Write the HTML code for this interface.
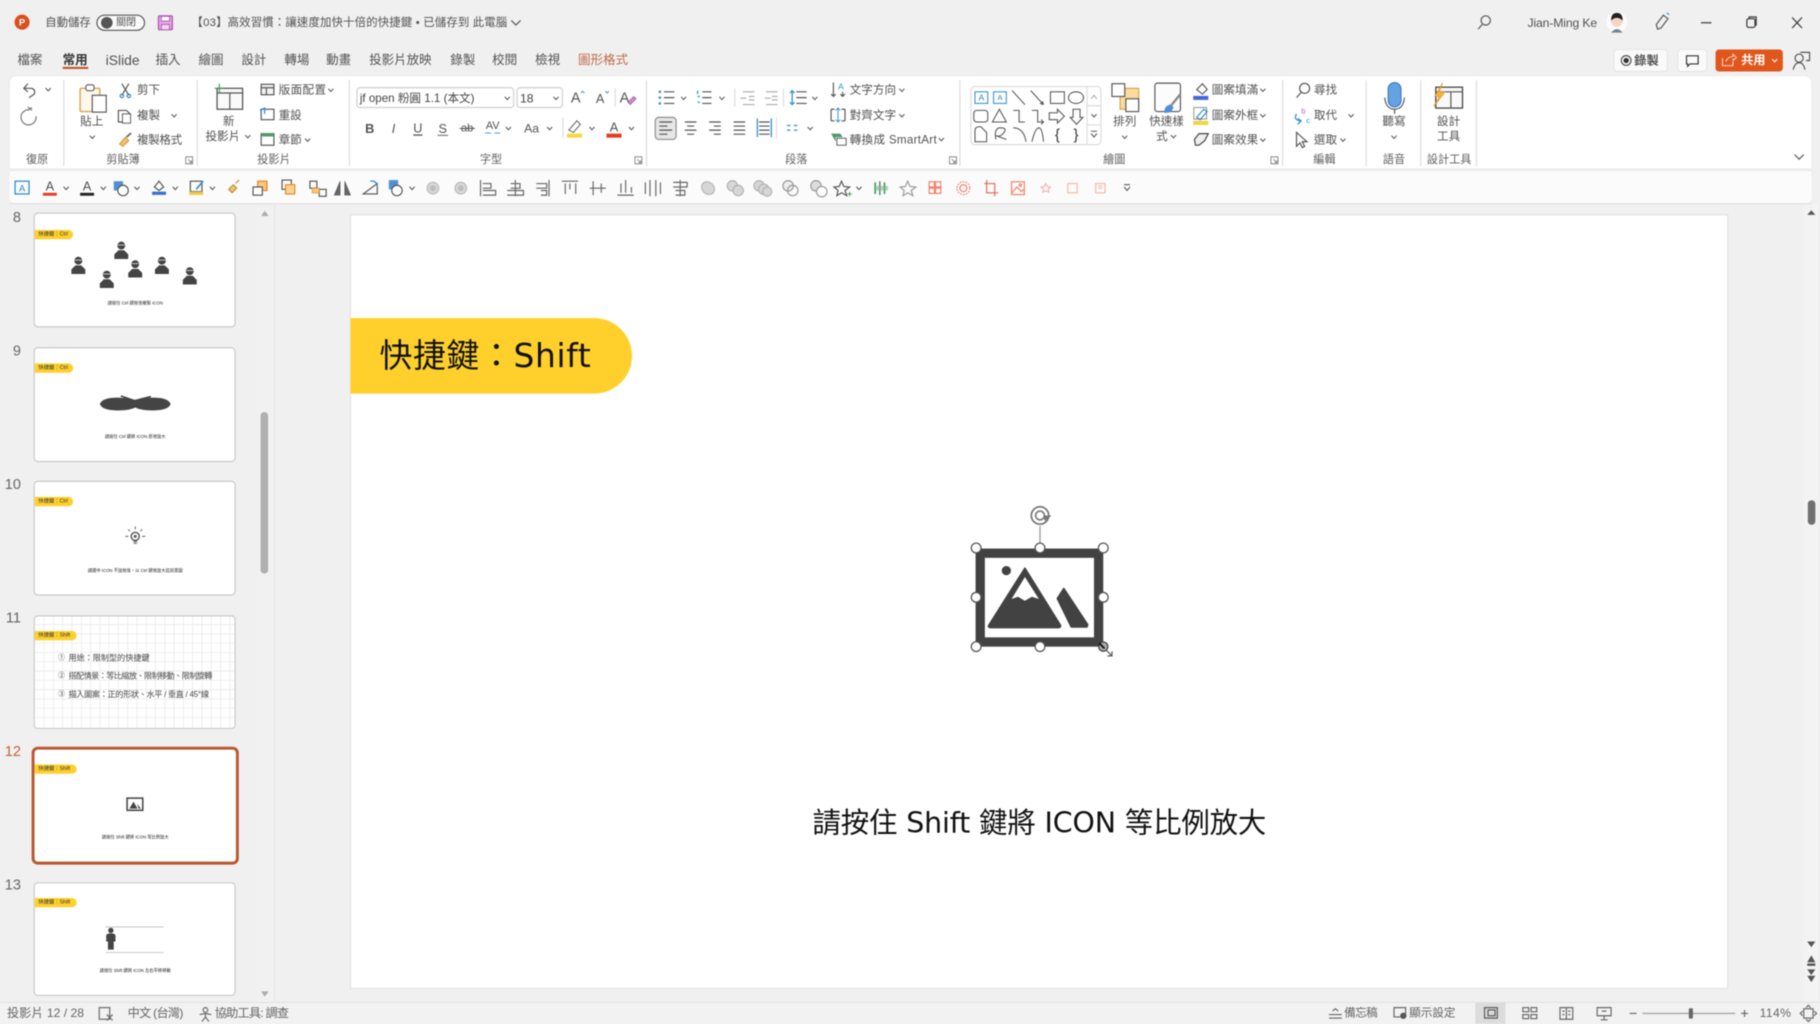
<!DOCTYPE html>
<html lang="zh-Hant"><head><meta charset="utf-8"><title>PowerPoint</title>
<style>
html,body{margin:0;padding:0;background:#f0f0f0;width:1820px;height:1024px;overflow:hidden}
svg{display:block;filter:blur(.45px)}
text{font-family:"Liberation Sans","Noto Sans CJK TC",sans-serif;font-size:10px;fill:#525252;dominant-baseline:central;transform:translateY(.6px)}
.m{text-anchor:middle}
.tab{font-size:10.8px}
.lbl{font-size:9.6px;fill:#5f5f5f}
.n{font-size:12.5px;fill:#666;text-anchor:end}
.cap{font-size:3.7px;fill:#222;text-anchor:middle}
.tt{font-size:4.6px;fill:#333}
.l{font-size:7px;fill:#444}
.big{font-family:"DejaVu Sans","Noto Sans CJK TC",sans-serif;fill:#111}
.i{fill:none;stroke:#555;stroke-width:1}
.g{fill:none;stroke:#666;stroke-width:1}
.b{fill:none;stroke:#2f8fd0;stroke-width:1.1}
.o{fill:none;stroke:#ef7f6a;stroke-width:1}
.c{fill:none;stroke:#555;stroke-width:.9}
</style></head><body>
<svg width="1820" height="1024" viewBox="0 0 1568 882" xmlns="http://www.w3.org/2000/svg">
<defs>
<path id="ch" d="M-2.2-1.2 0 1.2 2.2-1.2" fill="none" stroke="#555" stroke-width=".9"/>
<g id="person"><circle cx="0" cy="-4.500" r="3.400" fill="#444"/><path d="M-6 7V3L-2.500 -.5H2.500L6 3V7Z" fill="#444"/><path d="M-3-5H3" stroke="#fff" stroke-width=".6"/></g>
<g id="dl"><path d="M-3-3H3V3H-3Z M-1-1 2 2M2 0V2H0" fill="none" stroke="#777" stroke-width=".7"/></g>
</defs>
<rect width="1568" height="882" fill="#f0f0f0"/>

<!-- title bar -->
<circle cx="19" cy="19" r="6.5" fill="#d9501e"/><text x="19" y="18.500" class="m" style="font-size:8px;font-weight:bold;fill:#fff">P</text>
<text x="39" y="19" style="font-size:9.8px">自動儲存</text>
<rect x="83.5" y="13" width="41" height="13" rx="6.5" fill="#fafafa" stroke="#555"/>
<circle cx="92" cy="19.500" r="5" fill="#555"/><text x="100" y="19" style="font-size:8.600px">關閉</text>
<rect x="136.500" y="13.500" width="12" height="12" rx="1" fill="#e3a6e0" stroke="#a94fb0"/><rect x="139" y="14" width="7" height="4" fill="#fff" stroke="#a94fb0" stroke-width=".7"/><rect x="139" y="21" width="7" height="4.500" fill="#f2d8f2" stroke="#a94fb0" stroke-width=".7"/>
<text x="165" y="19" style="font-size:9.800px" textLength="272">【03】高效習慣：讓速度加快十倍的快捷鍵 • 已儲存到 此電腦</text>
<path d="M440.500 17.500 444.500 21.500 448.500 17.500" fill="none" stroke="#555"/>
<!-- right of title -->
<circle cx="1280" cy="17.500" r="4" class="i"/><path d="M1277 21 1273.500 25" class="i"/>
<text x="1316" y="19" style="font-size:10.500px" textLength="60">Jian-Ming Ke</text>
<circle cx="1393" cy="19" r="9" fill="#fbfbfb"/><circle cx="1393" cy="18" r="5" fill="#f5d6c3"/><path d="M1388 17.500Q1388 11 1393 11T1398 17.500Q1393 13 1388 17.500Z" fill="#222"/><path d="M1388 28Q1393 22 1398 28Z" fill="#6d8595"/>
<path d="M1428 25 1427 21 1433 13 1437 16 1431 24Z" class="i"/><path d="M1436 11 1438 12.500" stroke="#3a9bd5" stroke-width="1"/>
<path d="M1465.500 19.500H1474.500" stroke="#333"/>
<rect x="1505" y="16" width="7" height="7.500" rx="1.500" class="i" style="stroke:#333"/><path d="M1507 16V14.500H1513V21.500H1512" class="i" style="stroke:#333"/>
<path d="M1544 15 1552.500 24M1552.500 15 1544 24" stroke="#333" fill="none"/>

<!-- tabs -->
<text x="15" y="51" class="tab">檔案</text>
<text x="54" y="51" class="tab" style="fill:#333;font-weight:bold">常用</text><rect x="54" y="57.500" width="22" height="1.800" fill="#c4562a"/>
<text x="91" y="51" class="tab" style="font-size:12px">iSlide</text>
<text x="134" y="51" class="tab">插入</text><text x="171" y="51" class="tab">繪圖</text><text x="208" y="51" class="tab">設計</text><text x="245" y="51" class="tab">轉場</text><text x="281" y="51" class="tab">動畫</text><text x="318" y="51" class="tab">投影片放映</text><text x="388" y="51" class="tab">錄製</text><text x="424" y="51" class="tab">校閱</text><text x="461" y="51" class="tab">檢視</text>
<text x="498" y="51" class="tab" style="fill:#bf6a4a">圖形格式</text>

<!-- top-right buttons -->
<rect x="1390.500" y="42.500" width="46" height="19" rx="3" fill="#fafafa" stroke="#e6e6e6"/><circle cx="1401" cy="52" r="4.200" class="i"/><circle cx="1401" cy="52" r="2.300" fill="#333"/><text x="1408" y="51.500" style="font-size:10.500px;font-weight:bold">錄製</text>
<rect x="1445.500" y="42.500" width="25" height="19" rx="3" fill="#fafafa" stroke="#e6e6e6"/><path d="M1453 48H1463V55H1456L1454 57V55H1453Z" class="i" style="stroke:#333"/>
<rect x="1478" y="42.500" width="58" height="19" rx="3" fill="#e0561b"/><path d="M1484 50V56.500H1493V53M1487 53Q1488 49 1493 48.500V46.500L1496 49.500 1493 52V50.500" fill="none" stroke="#fff" stroke-width=".8" opacity=".85"/><text x="1500" y="51" style="font-size:10.500px;font-weight:bold;fill:#fff" >共用</text><path d="M1526.800 50.800 1529 53.200 1531.200 50.800" fill="none" stroke="#fff" stroke-width=".9"/>
<circle cx="1550" cy="50" r="3.500" class="i"/><path d="M1545 60Q1546 54 1550 54T1555 60M1551 45H1559V52H1556" class="i"/>

<!-- ribbon -->
<rect x="8" y="65" width="1553" height="110" rx="6" fill="#fff" stroke="#ececec"/>
<rect x="8" y="145" width="1553" height="2.500" fill="#ebebeb"/>
<rect x="8" y="147.500" width="1553" height="27.500" rx="5" fill="#fbfbfb"/>
<path d="M55 69V143M170 69V143M301 69V143M557 69V143M827 69V143M1105 69V143M1177 69V143M1224 69V143M1272 69V143" stroke="#dcdcdc"/>
<path d="M8 175.500H1561" stroke="#d8d8d8" opacity=".7"/>

<!-- undo group -->
<path d="M24 72 20.500 76 24 79M21 76H27Q31 77 29.500 81L25 84" class="i"/><use href="#ch" x="41.500" y="77"/>
<path d="M27.500 92.500 24 95M24 92 27.500 95" class="i" style="stroke:#777"/><path d="M25 94.500A6.500 6.500 0 1 0 31 100" class="i" style="stroke:#777"/>
<text x="32" y="137" class="lbl m">復原</text>

<!-- clipboard -->
<rect x="69" y="76" width="17" height="20" rx="1" fill="#fdf7ec" stroke="#dba24f" stroke-width="1.200"/><rect x="74" y="73" width="7" height="5" rx="1.500" fill="#fff" stroke="#666"/><rect x="79.500" y="82" width="12" height="14.500" fill="#fff" stroke="#555"/>
<text x="79" y="104" class="m">貼上</text><use href="#ch" x="79.500" y="118"/>
<path d="M105 72 111 82M111 72 105 82" class="i"/><circle cx="105" cy="82.500" r="1.500" stroke="#3a87c5" fill="none"/><circle cx="111" cy="82.500" r="1.500" stroke="#3a87c5" fill="none"/>
<text x="118" y="77">剪下</text>
<path d="M102 95H109L112 98V105H102Z" class="i"/><rect x="105.500" y="98" width="7" height="8" fill="#fff" stroke="#555" stroke-width=".8"/><text x="118" y="99">複製</text><use href="#ch" x="150" y="99.500"/>
<path d="M103 124 108 118 111 121 106 126Z" fill="#f0c26b" stroke="#c98a2a" stroke-width=".7"/><path d="M109 118 113 114.500" stroke="#666" stroke-width="1.500"/><text x="118" y="120" textLength="39">複製格式</text>
<text x="106" y="137" class="lbl m">剪貼簿</text><use href="#dl" x="163" y="138"/>

<!-- slides -->
<rect x="187" y="76" width="22" height="18" class="i" style="stroke-width:1.100;fill:#fafafa"/><path d="M187 80H209M198 80V94" class="i"/><path d="M189 72V80M185 76H193" stroke="#3c9a56" stroke-width="1"/>
<text x="197" y="104" class="m">新</text><text x="192" y="117" class="m">投影片</text><use href="#ch" x="213.500" y="117.500"/>
<rect x="225" y="72.500" width="11" height="9" fill="#f3f3f3" stroke="#555"/><path d="M225 75.500H236M229.500 75.500V81.500" class="i"/><text x="240" y="77" textLength="41">版面配置</text><use href="#ch" x="285" y="77.500"/>
<rect x="225" y="94" width="11" height="9" class="i"/><path d="M224 95 228 93 228 98" class="b"/><text x="240" y="99">重設</text>
<rect x="225" y="115" width="11" height="10" class="i"/><rect x="225" y="114.500" width="11" height="3" fill="#4f9b6a"/><text x="240" y="120">章節</text><use href="#ch" x="265" y="120.500"/>
<text x="236" y="137" class="lbl m">投影片</text>

<!-- font -->
<rect x="307.500" y="75.500" width="135" height="17" rx="2.500" fill="#fff" stroke="#cfcfcf"/><text x="310" y="84" style="font-size:10px;fill:#444">jf open 粉圓 1.1 (本文)</text><use href="#ch" x="437" y="84.500"/>
<rect x="445.500" y="75.500" width="39" height="17" rx="2.500" fill="#fff" stroke="#cfcfcf"/><text x="448" y="84" style="font-size:10.500px;fill:#444">18</text><use href="#ch" x="479" y="84.500"/>
<text x="496" y="84" class="m" style="font-size:12.500px">A</text><path d="M500.500 80 502 78.500 503.500 80" class="i" style="stroke:#2f8fd0;stroke-width:.8"/>
<text x="517" y="84" class="m" style="font-size:11px">A</text><path d="M521.500 78.500 523 80 524.500 78.500" class="i" style="stroke:#2f8fd0;stroke-width:.8"/>
<path d="M530 76V92" stroke="#ddd"/>
<text x="538" y="84" class="m" style="font-size:12.500px">A</text><path d="M541 88 546 83 548 85 543 90Z" fill="#d389d0" stroke="#9a4f9a" stroke-width=".6"/>
<text x="318.500" y="110" class="m" style="font-weight:bold;font-size:11px">B</text>
<text x="339" y="110" class="m" style="font-style:italic;font-size:11px">I</text>
<text x="360" y="109.500" class="m" style="font-size:11px;text-decoration:underline">U</text>
<text x="381.500" y="110" class="m" style="font-size:11px">S</text><path d="M377 116.500H386" stroke="#777"/>
<text x="402.500" y="110" class="m" style="font-size:9.500px">ab</text><path d="M396 110.500H409" stroke="#555"/>
<text x="424.500" y="108" class="m" style="font-size:9.500px">AV</text><path d="M418 114.500H423M426 114.500H431" class="b" style="stroke-width:.8"/><use href="#ch" x="438" y="110.500"/>
<text x="458" y="110" class="m" style="font-size:10.500px">Aa</text><use href="#ch" x="473.500" y="110.500"/>
<path d="M485 101V119" stroke="#ddd"/>
<path d="M490 112 497 104 500 107 494 114Z" fill="none" stroke="#555" stroke-width=".8"/><rect x="488.500" y="115" width="13" height="3.500" fill="#f7d83e"/><use href="#ch" x="510" y="110.500"/>
<text x="529" y="108.500" class="m" style="font-size:11px">A</text><rect x="522.500" y="115" width="13" height="3.500" fill="#e73b22"/><use href="#ch" x="544" y="110.500"/>
<text x="423" y="137" class="lbl m">字型</text><use href="#dl" x="550" y="138"/>

<!-- paragraph -->
<path d="M572 79H581M572 84H581M572 89H581" class="i"/><path d="M567.500 79H569.500M567.500 84H569.500M567.500 89H569.500" class="b" style="stroke-width:2"/><use href="#ch" x="589" y="84.500"/>
<path d="M605 79H613M605 84H613M605 89H613" class="i"/><path d="M601 78V81M601 83H603M601 88H603" class="b"/><use href="#ch" x="622" y="84.500"/>
<path d="M633 76V92" stroke="#ddd"/>
<path d="M640 79H650M645 83H650M645 86H650M640 90H650M643 84.500 638 84.500" class="i" style="stroke:#aaa"/>
<path d="M660 79H670M665 83H670M665 86H670M660 90H670M659 84.500H664" class="i" style="stroke:#aaa"/>
<path d="M675 76V92" stroke="#ddd"/>
<path d="M686 79H695M686 84H695M686 89H695" class="i"/><path d="M682.500 78V90M680.500 80 682.500 78 684.500 80M680.500 88 682.500 90 684.500 88" class="b"/><use href="#ch" x="702" y="84.500"/>
<rect x="564.500" y="101" width="18" height="19" rx="3" fill="#e6e6e6" stroke="#8d8d8d"/><path d="M568 105H579M568 108.500H575M568 112H579M568 115.500H575" class="i"/>
<path d="M590 105H600M592 108.500H598M590 112H600M592 115.500H598" class="i"/>
<path d="M611 105H621M615 108.500H621M611 112H621M615 115.500H621" class="i"/>
<path d="M632 105H642M632 108.500H642M632 112H642M632 115.500H642" class="i"/>
<path d="M652.500 102V118M664.500 102V118" class="b"/><path d="M654 105H663M654 108.500H663M654 112H663M654 115.500H663" class="i" style="stroke:#555"/>
<path d="M669 101V119" stroke="#ddd"/>
<path d="M678 108H681M678 112H681M684 108H687M684 112H687" class="b"/><use href="#ch" x="698" y="110.500"/>
<path d="M718 71V83M716 81 718 83 720 81M726 79V83M724 81 726 83 728 81" class="i"/><text x="722" y="74" style="font-size:7.500px;fill:#2f8fd0">A</text>
<text x="732" y="77" textLength="40">文字方向</text><use href="#ch" x="777" y="77.500"/>
<path d="M716 94H719M716 104H719M716 94V104M728 94H725M728 104H725M728 94V104" class="i"/><path d="M722 93V105M720 95 722 93 724 95M720 103 722 105 724 103" class="b" style="stroke-width:.8"/>
<text x="732" y="99" textLength="40">對齊文字</text><use href="#ch" x="777" y="99.500"/>
<path d="M716 115H724L726 118H720V122L716 115Z" fill="#4f9b6a"/><rect x="721" y="119" width="8" height="6" fill="#fff" stroke="#555" stroke-width=".8"/>
<text x="732" y="120" textLength="75">轉換成 SmartArt</text><use href="#ch" x="811" y="120"/>
<text x="686" y="137" class="lbl m">段落</text><use href="#dl" x="821" y="138"/>

<!-- shapes gallery -->
<rect x="836.500" y="74.500" width="112" height="50" rx="3" fill="#fff" stroke="#dcdcdc"/>
<path d="M936.500 74.500V124.500M936.500 91H948.500M936.500 107.500H948.500" stroke="#dcdcdc"/>
<path d="M940 85 942.500 82 945 85" class="c" style="stroke:#aaa"/><use href="#ch" x="942.500" y="99.500"/><path d="M940 113H945M940 115 942.500 118 945 115" class="c"/>
<rect x="840" y="79" width="11" height="10" class="c" style="stroke:#2f8fd0"/><text x="845.500" y="83.500" class="m" style="font-size:7.500px;fill:#2f7fc0">A</text>
<rect x="856" y="79" width="11" height="10" class="c" style="stroke:#2f8fd0"/><text x="861.500" y="83.500" class="m" style="font-size:6.500px;fill:#2f7fc0">A</text>
<path d="M872 78 883 90M888 78 899 90M899 90 896 89M899 90 898 87" class="c"/>
<rect x="905" y="79" width="12" height="10" class="c"/><ellipse cx="927" cy="84" rx="6.500" ry="5" class="c"/>
<rect x="839" y="95" width="12" height="10" rx="2.500" class="c"/><path d="M861 94 867 105H855Z" class="c"/><path d="M873 95H878V105H883M889 95H894V105H899M897 103 899 105 897 107" class="c"/><path d="M904 97H911V94L917 100 911 106V103H904Z" class="c"/><path d="M924.500 94H930.500V101H933L927.500 107 922 101H924.500Z" class="c"/>
<path d="M840 122V112Q840 109 845 109L850 114V122Z" class="c"/><path d="M858 120Q856 110 862 110T865 114 859 117 867 120" class="c"/><path d="M873 110Q882 110 884 122M889 122Q892 110 895 110T899 122" class="c"/>
<text x="911" y="115.500" class="m" style="font-size:13px;fill:#333">{</text><text x="927" y="115.500" class="m" style="font-size:13px;fill:#333">}</text>

<!-- arrange etc -->
<rect x="965" y="76" width="16" height="18" fill="#fbdc9e" stroke="#d9a24b"/><rect x="958" y="72" width="11" height="11" fill="#fff" stroke="#555"/><rect x="970" y="85" width="11" height="11" fill="#fff" stroke="#555"/>
<text x="969" y="104" class="m">排列</text><use href="#ch" x="969" y="118"/>
<rect x="995" y="71.500" width="22" height="24.500" rx="2" fill="#fcfcfc" stroke="#555"/><path d="M1017 81 1008 92" stroke="#888" stroke-width="2"/><path d="M1003 97Q1003 91 1008 90L1011 92Q1010 98 1003 97Z" fill="#4f91d8"/>
<text x="1005" y="104" class="m">快速樣</text><text x="1001" y="117" class="m">式</text><use href="#ch" x="1011" y="117.500"/>
<path d="M1031 77 1036 72 1040 77 1036 81Z" class="i"/><rect x="1028" y="82.500" width="13" height="3.500" fill="#4668d8"/><text x="1044" y="77" textLength="40">圖案填滿</text><use href="#ch" x="1088" y="77.500"/>
<path d="M1031 101 1037 94 1040 96 1034 103Z" fill="#fff" stroke="#2f8fd0"/><rect x="1028" y="104" width="13" height="3.500" fill="#f4d33e"/><rect x="1028.500" y="92.500" width="11" height="10" fill="none" stroke="#666" stroke-width=".6"/><text x="1044" y="99" textLength="40">圖案外框</text><use href="#ch" x="1088" y="99.500"/>
<path d="M1029 120 1033 115H1041L1038 121 1033 125H1030Z" fill="#eee" stroke="#444"/><text x="1044" y="120" textLength="40">圖案效果</text><use href="#ch" x="1088" y="120.500"/>
<text x="960" y="137" class="lbl m">繪圖</text><use href="#dl" x="1098" y="138"/>

<!-- editing -->
<circle cx="1124" cy="76" r="4.300" class="i"/><path d="M1121 79.500 1117 84" class="i"/><text x="1132" y="77">尋找</text>
<text x="1123" y="95" class="m" style="font-size:6.500px;fill:#c060b0">b</text><text x="1127" y="103" class="m" style="font-size:6.500px;fill:#2f8fd0">c</text><path d="M1117 98Q1114 103 1120 104M1118 107 1121 104 1118 102" class="b"/><text x="1132" y="99">取代</text><use href="#ch" x="1164" y="99.500"/>
<path d="M1117 114V126L1120 123 1122 127 1124 126 1122 122H1126Z" class="i"/><text x="1132" y="120">選取</text><use href="#ch" x="1157" y="120.500"/>
<text x="1141" y="137" class="lbl m">編輯</text>

<!-- voice -->
<rect x="1196" y="71" width="11" height="21" rx="5.500" fill="#63a3e4" stroke="#3f7cc0"/><path d="M1193 84Q1194 94 1201.500 94T1210 84M1201.500 94V98" class="i"/>
<text x="1201" y="104" class="m">聽寫</text><use href="#ch" x="1201" y="118"/>
<text x="1201" y="137" class="lbl m">語音</text>

<!-- designer -->
<rect x="1237" y="75" width="23" height="18" fill="#f9f9f9" stroke="#444" stroke-width="1.100"/><path d="M1237 79H1260M1250 79V93" class="i"/><path d="M1243 71 1236 83H1240L1235 92 1245 79H1240Z" fill="#f6b33c" stroke="#d98b1f" stroke-width=".5"/>
<text x="1248" y="104" class="m">設計</text><text x="1248" y="117" class="m">工具</text>
<text x="1248.500" y="137" class="lbl m">設計工具</text>
<path d="M1546 133 1550 137 1554 133" fill="none" stroke="#555"/>

<!-- QAT -->
<rect x="13" y="156" width="12" height="11" class="b"/><text x="19" y="161.500" class="m" style="font-size:8px;fill:#2f7fc0">A</text>
<text x="43" y="159.500" class="m" style="font-size:11px">A</text><rect x="37" y="166" width="12" height="2.500" fill="#e73b22"/><use href="#ch" x="57" y="162"/>
<text x="75" y="159.500" class="m" style="font-size:11px">A</text><rect x="69" y="166" width="12" height="2.500" fill="#222"/><use href="#ch" x="89" y="162"/>
<rect x="98" y="156" width="8" height="8" fill="#4f91d8"/><circle cx="106" cy="164" r="4.500" fill="#fff" stroke="#555"/><use href="#ch" x="118" y="162"/>
<path d="M133 161 137 156 141 161 137 164Z" class="i"/><rect x="131" y="165" width="12" height="2.800" fill="#3a6fd8"/><use href="#ch" x="151" y="162"/>
<rect x="164" y="156" width="10" height="9" class="i"/><path d="M169 163 175 156" stroke="#2f8fd0" stroke-width="1.400"/><rect x="163" y="165" width="12" height="2.800" fill="#f4c83e"/><use href="#ch" x="183" y="162"/>
<path d="M197 163 201 159 204 162 200 166ZM203 158 206 155" fill="#f0c26b" stroke="#b98b3a" stroke-width=".9"/>
<rect x="222" y="156" width="8" height="8" fill="#f9c97a" stroke="#e07f2a"/><rect x="218" y="161" width="8" height="7" fill="#fff" stroke="#555"/>
<rect x="243" y="155" width="8" height="8" fill="none" stroke="#555"/><rect x="246" y="159" width="8" height="8" fill="#fbd491" stroke="#e08b2a"/>
<rect x="267" y="156" width="6" height="6" class="i"/><rect x="275" y="163" width="6" height="6" class="i"/><rect x="269" y="162" width="6" height="4" fill="#f9c97a" stroke="#e07f2a" stroke-width=".6"/>
<path d="M293 156V168H288ZM297 156V168H302Z" fill="#666" stroke="#555" stroke-width=".5"/>
<path d="M313 167 325 167 325 158Z" class="i"/><path d="M319 156Q324 155 325 160" class="b"/>
<rect x="335" y="155" width="8" height="8" fill="#4f91d8"/><circle cx="342" cy="164" r="4.500" fill="#fff" stroke="#555"/><use href="#ch" x="355" y="162"/>
<circle cx="373" cy="162" r="5" fill="#d8d8d8" stroke="#bbb"/><circle cx="373" cy="162" r="2.500" fill="#bcbcbc"/>
<circle cx="397" cy="162" r="5" fill="#d8d8d8" stroke="#bbb"/><circle cx="397" cy="162" r="2.500" fill="#bcbcbc"/>
<path d="M414 155V169M416 158H423V162H416M416 164H427V168H416" class="g"/>
<path d="M444 155V169M440 158H448V162H440M437 164H451V168H437" class="g"/>
<path d="M473 155V169M462 158H471V162H462M466 164H471V168H466" class="g"/>
<path d="M484 156H498M487 158V167M491 158V163M496 158V167" class="g"/>
<path d="M508 162H522M511 156V168M518 158V166" class="g"/>
<path d="M532 168H546M535 158V166M539 155V166M544 161V166" class="g"/>
<path d="M556 157V167M560 155V169M565 155V169M569 157V167" class="g"/>
<path d="M586 155V169M580 157H592V161H580M582 164H590V168H582" class="g"/>
<g fill="#d6d6d6" stroke="#aaa" stroke-width=".8"><ellipse cx="610" cy="162" rx="6" ry="5" transform="rotate(45 610 162)"/><circle cx="631" cy="160" r="4.500"/><circle cx="636" cy="164" r="4.500"/><circle cx="654" cy="160" r="4.500"/><circle cx="658" cy="163" r="4.500"/><circle cx="661" cy="165" r="4"/></g>
<circle cx="679" cy="160" r="4.500" fill="#ececec" stroke="#999"/><circle cx="683" cy="164" r="4.500" fill="none" stroke="#999"/>
<circle cx="703" cy="160" r="4.500" fill="#ddd" stroke="#999"/><circle cx="708" cy="165" r="4.500" fill="#fff" stroke="#999"/>
<path d="M725 156 727 160.500 732 161 728 164 729.500 168.500 725 166 721 168.500 722 164 718.500 161 723 160.500Z" class="i"/><path d="M732 165V169M730 167H734" stroke="#3c9a56" stroke-width=".8"/><use href="#ch" x="740" y="162"/>
<path d="M754 157V167" stroke="#3c9a56" stroke-width="1.400"/><path d="M758 156V168" stroke="#555"/><path d="M762 157V167" stroke="#3c9a56" stroke-width="1.400"/><path d="M753 160H765V164H753Z" fill="#7ab890" stroke="none" opacity=".6"/>
<path d="M782 156 784 160.500 789 161 785 164 786.500 168.500 782 166 778 168.500 779 164 775.500 161 780 160.500Z" class="i" style="stroke:#999"/>
<rect x="800.500" y="156.500" width="4.500" height="4.500" class="o"/><rect x="806" y="156.500" width="4.500" height="4.500" class="o"/><rect x="800.500" y="162" width="4.500" height="4.500" class="o"/><rect x="806" y="162" width="4.500" height="4.500" class="o"/>
<circle cx="830" cy="162" r="3" class="o"/><circle cx="830" cy="162" r="5.500" class="o" stroke-dasharray="1.500 1"/>
<path d="M850 155V166H860M848 158H857V169" class="o" style="stroke:#e06a55"/>
<rect x="871.500" y="156.500" width="11" height="11" class="o"/><path d="M872 166 876 161 880 165 882 163" class="o"/><circle cx="879" cy="159.500" r="1" class="o"/>
<path d="M901 158 902.200 160.500 905 161 903 163 903.500 165.500 901 164.300 898.500 165.500 899 163 897 161 899.800 160.500Z" fill="none" stroke="#f2a99a" stroke-width=".8"/>
<rect x="920" y="158" width="8" height="8" fill="none" stroke="#f2a99a" stroke-width=".8"/><rect x="944" y="158" width="8" height="8" fill="none" stroke="#f2a99a" stroke-width=".8"/><path d="M946 160H950M946 162H950" stroke="#f2a99a" stroke-width=".7"/>
<path d="M968.500 159H973.500M968.500 161 971 164 973.500 161" class="c"/>

<!-- left scrollbar -->
<path d="M225 186 228 181.500 231.500 186Z" fill="#666"/>
<rect x="224.500" y="355" width="6.500" height="139" rx="3" fill="#6f6f6f"/>
<path d="M225 854 228 858.500 231.500 854Z" fill="#666"/>
<rect x="221" y="176" width="15" height="687" fill="#f2f2f2" opacity=".5"/>
<path d="M236.500 176V862" stroke="#e9e9e9"/>

<!-- thumbnails -->
<g stroke="#c9c9c9" fill="#fff">
<rect x="29.500" y="183.500" width="173" height="98" rx="3"/>
<rect x="29.500" y="299.500" width="173" height="98" rx="3"/>
<rect x="29.500" y="414.500" width="173" height="98" rx="3"/>
<rect x="29.500" y="530.500" width="173" height="97" rx="3"/>
<rect x="29.500" y="760.500" width="173" height="97" rx="3"/>
</g>
<rect x="28.500" y="644.500" width="176" height="99" rx="4" fill="#fff" stroke="#b9572f" stroke-width="2.500"/>
<!-- grid for 11 -->
<g stroke="#e8e8e8" stroke-width=".6">
<path d="M38 531V627M46 531V627M54 531V627M62 531V627M70 531V627M78 531V627M86 531V627M94 531V627M102 531V627M110 531V627M118 531V627M126 531V627M134 531V627M142 531V627M150 531V627M158 531V627M166 531V627M174 531V627M182 531V627M190 531V627M198 531V627"/>
<path d="M30 538H202M30 546H202M30 554H202M30 562H202M30 570H202M30 578H202M30 586H202M30 594H202M30 602H202M30 610H202M30 618H202"/>
</g>
<!-- pills -->
<g fill="#ffd02b">
<path d="M30 198H59A4 4 0 0 1 59 206H30Z"/><path d="M30 313H59A4 4 0 0 1 59 321H30Z"/><path d="M30 428H59A4 4 0 0 1 59 436H30Z"/>
<path d="M30 543.500H62A4 4 0 0 1 62 551.500H30Z"/><path d="M30 658.500H62A4 4 0 0 1 62 666.500H30Z"/><path d="M30 773.500H62A4 4 0 0 1 62 781.500H30Z"/>
</g>
<text x="33" y="201.500" class="tt">快捷鍵：Ctrl</text><text x="33" y="316.500" class="tt">快捷鍵：Ctrl</text><text x="33" y="431.500" class="tt">快捷鍵：Ctrl</text>
<text x="33" y="547" class="tt">快捷鍵：Shift</text><text x="33" y="662" class="tt">快捷鍵：Shift</text><text x="33" y="777" class="tt">快捷鍵：Shift</text>
<text x="18" y="187" class="n">8</text><text x="18" y="302" class="n">9</text><text x="18" y="417" class="n">10</text><text x="18" y="532" class="n">11</text><text x="18" y="647" class="n" style="fill:#c4623a">12</text><text x="18" y="762" class="n">13</text>
<!-- thumb 8 -->
<use href="#person" x="67.500" y="229"/><use href="#person" x="104.500" y="216"/><use href="#person" x="92" y="241"/><use href="#person" x="116.500" y="232"/><use href="#person" x="139.500" y="229"/><use href="#person" x="163.500" y="238"/>
<text x="116.500" y="260.500" class="cap">請按住 Ctrl 鍵拖曳複製 ICON</text>
<!-- thumb 9 -->
<path d="M86 348Q88 342.500 101 342.500 112 342.500 116.500 345 121 342.500 132 342.500 145 342.500 147 348 145 353.500 132 353.500 121 353.500 116.500 351 112 353.500 101 353.500 88 353.500 86 348Z" fill="#444"/>
<path d="M116 345 104 341M116 345 130 341.500" stroke="#444" stroke-width="1.300"/>
<text x="116.500" y="375.500" class="cap">請按住 Ctrl 鍵將 ICON 原地放大</text>
<!-- thumb 10 -->
<circle cx="116.500" cy="462" r="3.500" fill="none" stroke="#555" stroke-width="1.200"/><circle cx="116.500" cy="462" r="1.300" fill="#555"/><path d="M115 466.500H118M115 468H118M116.500 453.500V456M108 462H110.500M122.500 462H125M110.500 456 112 457.500M122.500 456 121 457.500" stroke="#555" stroke-width=".8"/>
<text x="116.500" y="491" class="cap">請選中 ICON 不放拖曳，以 Ctrl 鍵拖放大這前景圖</text>
<!-- thumb 11 -->
<text x="50" y="566" class="l" style="font-size:6px">①</text><text x="59" y="566" class="l">用途：限制型的快捷鍵</text>
<text x="50" y="581.500" class="l" style="font-size:6px">②</text><text x="59" y="581.500" class="l" textLength="124">搭配情景：等比縮放、限制移動、限制旋轉</text>
<text x="50" y="597.500" class="l" style="font-size:6px">③</text><text x="59" y="597.500" class="l" textLength="121">描入圖案：正的形狀、水平 / 垂直 / 45°線</text>
<!-- thumb 12 -->
<rect x="109.500" y="687.500" width="13.500" height="10.500" fill="#fff" stroke="#444" stroke-width="1.300"/><path d="M111.500 696.500 115 690.500 118.500 696.500ZM118 692.500 121.500 696.500H119.500Z" fill="#444"/>
<text x="116.500" y="720.500" class="cap">請按住 Shift 鍵將 ICON 等比例放大</text>
<!-- thumb 13 -->
<circle cx="95.500" cy="801.500" r="2.300" fill="#444"/><path d="M91.500 806Q91.500 804 95.500 804T99.500 806V811H98V818H93V811H91.500Z" fill="#444"/>
<path d="M91 798.500H141M91 820.500H141" stroke="#bbb" stroke-width=".7"/>
<text x="116.500" y="835.500" class="cap">請按住 Shift 鍵將 ICON 左右平移移動</text>

<!-- main slide -->
<rect x="302" y="185" width="1186.500" height="666.500" fill="#fff" stroke="#e2e2e2"/>
<path d="M302 274H512A32.500 32.500 0 0 1 512 339H302Z" fill="#ffd02b"/>
<text x="327" y="306" class="big" style="font-size:28.300px" textLength="182">快捷鍵：Shift</text>

<!-- picture icon -->
<rect x="844.500" y="476.500" width="102" height="76.500" fill="#fff" stroke="#424242" stroke-width="8"/>
<circle cx="867" cy="491.500" r="4" fill="#424242"/>
<path d="M883 489.500 913.500 538.500Q914 540.500 912 540.500H853.500Q851 540.500 852 538.500Z" fill="#424242" stroke="#424242" stroke-width="1.500" stroke-linejoin="round"/>
<path d="M883 497 871.500 516 877 514 883 517.500 889 514 895 516Z" fill="#fff"/>
<path d="M916.500 507 911 515.500 923 540H936.500L937 538Z" fill="#424242" stroke="#424242" stroke-width="1.500" stroke-linejoin="round"/>
<path d="M896 472V453" stroke="#8d8d8d"/>
<circle cx="896" cy="444" r="7.500" fill="#fff" stroke="#777" stroke-width="1.500"/><circle cx="896" cy="444" r="3.800" fill="none" stroke="#777" stroke-width="1.400"/><path d="M900 449 906 444H899Z" fill="#777"/>
<g fill="#fff" stroke="#555" stroke-width="1.100">
<circle cx="841" cy="472" r="4.200"/><circle cx="896" cy="472" r="4.200"/><circle cx="950.500" cy="472" r="4.200"/><circle cx="841" cy="514.500" r="4.200"/><circle cx="950.500" cy="514.500" r="4.200"/><circle cx="841" cy="557" r="4.200"/><circle cx="896" cy="557" r="4.200"/>
</g>
<circle cx="950.500" cy="557" r="4" fill="#aaa" stroke="#444" stroke-width="1.100"/><path d="M947 554 951.500 558.500" stroke="#111" stroke-width="1.600"/>
<path d="M953 560 958 565M958 561V565H954" fill="none" stroke="#555" stroke-width="1"/>

<text x="700" y="708.500" class="big" style="font-size:24.500px" textLength="391">請按住 Shift 鍵將 ICON 等比例放大</text>

<!-- right scrollbar -->
<rect x="1554" y="176" width="12" height="686" fill="#f3f3f3"/>
<path d="M1557 185 1560.500 181 1564 185Z" fill="#555"/>
<rect x="1557.500" y="431" width="6.500" height="21" rx="3" fill="#707070"/>
<path d="M1557 811H1564L1560.500 816Z" fill="#555"/>
<path d="M1560.500 823 1557 829H1564ZM1557 830H1564V832H1557Z" fill="#555"/>
<path d="M1557 835H1564L1560.500 840ZM1557 840.500H1564L1560.500 846Z" fill="#555"/>

<!-- status bar -->
<rect x="0" y="863" width="1568" height="19" fill="#f2f2f2"/><path d="M0 863.500H1568" stroke="#e4e4e4"/>
<text x="6" y="872" style="font-size:10.500px;fill:#666">投影片 12 / 28</text>
<rect x="85.500" y="868" width="9" height="10" class="g"/><path d="M92 874 97 879M97 874 92 879" class="g"/>
<text x="110" y="872" style="font-size:10.500px;fill:#666" textLength="48">中文 (台灣)</text>
<circle cx="177" cy="870" r="2" class="g"/><path d="M172 874 177 873 182 874M177 873V876L174 880M177 876 180 880" class="g"/>
<text x="185" y="872" style="font-size:10.500px;fill:#666" textLength="64">協助工具: 調查</text>
<path d="M1145 874H1156M1145 877H1156M1148 871 1150.500 869 1153 871" class="g"/>
<text x="1158" y="872" style="font-size:10px;fill:#666" textLength="29">備忘稿</text>
<path d="M1201 868H1211V876H1201Z" class="g"/><circle cx="1209" cy="875" r="2.700" fill="#555"/>
<text x="1214" y="872" style="font-size:10px;fill:#666" textLength="40">顯示設定</text>
<rect x="1271" y="863.500" width="26" height="18.500" fill="#dcdcdc"/>
<rect x="1279" y="868" width="11" height="9" class="i"/><rect x="1282" y="870" width="6" height="5" class="i"/>
<g class="g" stroke-width=".9"><rect x="1312" y="868" width="5" height="3.500"/><rect x="1319" y="868" width="5" height="3.500"/><rect x="1312" y="874" width="5" height="3.500"/><rect x="1319" y="874" width="5" height="3.500"/></g>
<path d="M1344 868H1355V878H1344ZM1349.500 868V878M1346 871H1348M1346 874H1348M1351 871H1353M1351 874H1353" class="g"/>
<path d="M1376 868H1388V875H1376ZM1382 875V878M1379 878.500H1385M1380 871H1384" class="g"/>
<path d="M1404 873H1410M1500 873H1506M1503 870V876" class="g"/>
<path d="M1415 873H1495" stroke="#a5a5a5" stroke-width="1.200"/>
<rect x="1455" y="868.500" width="3.500" height="9" rx="1" fill="#666"/>
<text x="1516" y="872" style="font-size:10.500px;fill:#666" textLength="27">114%</text>
<rect x="1554" y="869" width="8" height="8" class="g"/><path d="M1556 868 1558 866 1560 868M1556 878 1558 880 1560 878M1553 871 1551 873 1553 875M1563 871 1565 873 1563 875" class="g"/>
</svg>
</body></html>
